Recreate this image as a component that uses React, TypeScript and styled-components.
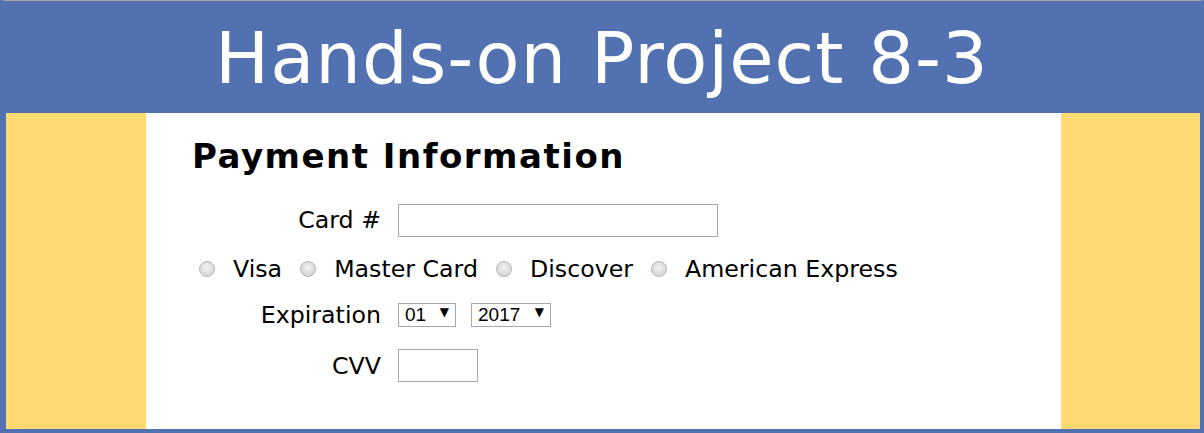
import React from "react";
import styled, { createGlobalStyle } from "styled-components";

const GlobalStyle = createGlobalStyle`
  html, body {
    margin: 0;
    padding: 0;
    background: #ffffff;
  }
  body {
    font-family: "DejaVu Sans", Verdana, sans-serif;
  }
`;

const Page = styled.div`
  width: 1204px;
  height: 433px;
  box-sizing: border-box;
  border-top: 1px solid #a7a7a7;
  border-left: 6px solid #5271b0;
  border-right: 4px solid #5271b0;
  border-bottom: 4px solid #5271b0;
  display: flex;
  flex-direction: column;
  background: #5271b0;
`;

const Header = styled.header`
  height: 112px;
  margin: 0 -4px 0 -6px;
  background: #5271b0;
  display: flex;
  align-items: center;
  justify-content: center;
  padding-top: 2px;
  box-sizing: border-box;
`;

const Title = styled.h1`
  margin: 0;
  color: #ffffff;
  font-weight: normal;
  font-size: 72px;
  letter-spacing: 1px;
  line-height: 110px;
  font-family: "DejaVu Sans", Verdana, sans-serif;
`;

const Body = styled.div`
  flex: 1;
  display: grid;
  grid-template-columns: 140px 1fr 139px;
`;

const Side = styled.aside`
  background: #ffda73;
`;

const Main = styled.section`
  background: #ffffff;
  padding: 25px 0 0 46px;
`;

const Heading = styled.h2`
  margin: 0;
  font-size: 34px;
  letter-spacing: 1.5px;
  line-height: 37px;
  font-weight: bold;
  color: #000;
`;

const Row = styled.div<{ $top: number; $h: number }>`
  display: flex;
  align-items: center;
  margin-top: ${(p) => p.$top}px;
  height: ${(p) => p.$h}px;
  font-size: 23.7px;
  color: #000;
`;

const Label = styled.label<{ $shift?: number }>`
  width: 189px;
  text-align: right;
  margin-right: 17px;
  margin-top: ${(p) => p.$shift ?? 0}px;
  white-space: nowrap;
`;

const TextInput = styled.input<{ $w: number }>`
  width: ${(p) => p.$w}px;
  height: 33px;
  box-sizing: border-box;
  border: 1px solid #a9a9a9;
  padding: 2px 4px;
  font-size: 18px;
  outline: none;
`;

const RadioGroup = styled.div`
  display: flex;
  align-items: center;
  padding-left: 7px;
`;

const Radio = styled.input`
  appearance: none;
  width: 16px;
  height: 16px;
  margin: 0 18px 0 0;
  border-radius: 50%;
  border: 1px solid #b4b4b4;
  box-sizing: border-box;
  background: radial-gradient(circle at 50% 40%, #f2f2f2 0%, #dcdcdc 60%, #cfcfcf 100%);
`;

const RadioText = styled.span`
  margin-right: 18px;
`;

const SelectWrap = styled.div<{ $w: number }>`
  position: relative;
  width: ${(p) => p.$w}px;
  height: 24px;
  margin-right: 15px;
`;

const Select = styled.select`
  appearance: none;
  width: 100%;
  height: 100%;
  box-sizing: border-box;
  border: 1px solid #a9a9a9;
  border-radius: 0;
  background: #fff;
  padding: 0 0 0 6px;
  font-family: "Liberation Sans", Arial, sans-serif;
  font-size: 19px;
  color: #000;
  outline: none;
`;

const Arrow = styled.span`
  position: absolute;
  right: 7px;
  top: 5px;
  font-size: 12px;
  line-height: 16px;
  pointer-events: none;
  color: #000;
`;

const months = ["01", "02", "03", "04", "05", "06", "07", "08", "09", "10", "11", "12"];
const years = ["2017", "2018", "2019", "2020", "2021", "2022"];

const cards = ["Visa", "Master Card", "Discover", "American Express"];

export default function App() {
  return (
    <>
      <GlobalStyle />
      <Page>
        <Header>
          <Title>Hands-on Project 8-3</Title>
        </Header>
        <Body>
          <Side />
          <Main>
            <Heading>Payment Information</Heading>
            <Row $top={28} $h={34}>
              <Label htmlFor="cardNumber">Card #</Label>
              <TextInput id="cardNumber" $w={320} />
            </Row>
            <Row $top={17} $h={30}>
              <RadioGroup>
                {cards.map((c) => (
                  <React.Fragment key={c}>
                    <Radio type="radio" name="cardType" />
                    <RadioText>{c}</RadioText>
                  </React.Fragment>
                ))}
              </RadioGroup>
            </Row>
            <Row $top={14} $h={26}>
              <Label htmlFor="month" $shift={8}>
                Expiration
              </Label>
              <SelectWrap $w={58}>
                <Select id="month" defaultValue="01">
                  {months.map((m) => (
                    <option key={m}>{m}</option>
                  ))}
                </Select>
                <Arrow>▼</Arrow>
              </SelectWrap>
              <SelectWrap $w={80}>
                <Select id="year" defaultValue="2017">
                  {years.map((y) => (
                    <option key={y}>{y}</option>
                  ))}
                </Select>
                <Arrow>▼</Arrow>
              </SelectWrap>
            </Row>
            <Row $top={25} $h={33}>
              <Label htmlFor="cvv">CVV</Label>
              <TextInput id="cvv" $w={80} />
            </Row>
          </Main>
          <Side />
        </Body>
      </Page>
    </>
  );
}
